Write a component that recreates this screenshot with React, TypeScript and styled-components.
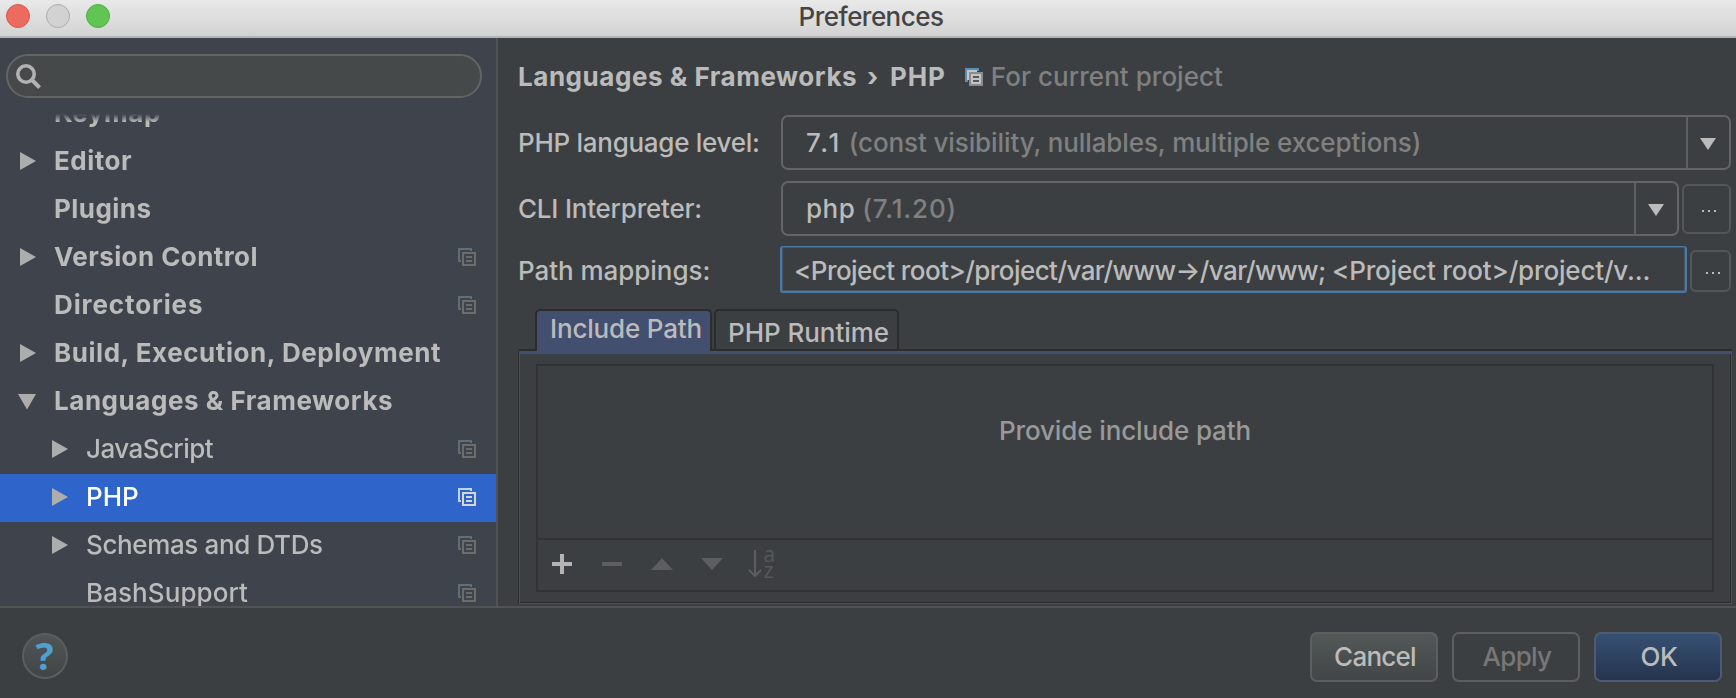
import React from 'react';
import styled, { createGlobalStyle } from 'styled-components';

const Global = createGlobalStyle`
  * { box-sizing: border-box; }
  body { margin: 0; background: #3c3f41; }
`;

const Window = styled.div`
  width: 1736px;
  height: 698px;
  display: flex;
  flex-direction: column;
  overflow: hidden;
  background: #3c3f41;
  color: #bbbbbb;
  font: 450 26px/32px Inter, "Liberation Sans", sans-serif;
  white-space: nowrap;
`;

const Label = styled.span<{ $ls?: number; $color?: string; $bold?: boolean }>`
  letter-spacing: ${p => p.$ls ?? 0}px;
  ${p => p.$bold && 'font-weight: 700;'}
  ${p => p.$color && `color: ${p.$color};`}
`;

/* Title bar */
const TitleBar = styled.header`
  flex: none;
  height: 38px;
  display: grid;
  grid-template-columns: 1fr auto 1fr;
  background: linear-gradient(#e9e9e9, #d3d3d3);
  border-bottom: 2px solid #b4b4b4;
`;
const Lights = styled.div`
  display: flex;
  gap: 16px;
  padding: 4px 0 0 6px;
`;
const Light = styled.span<{ $fill: string; $edge: string }>`
  width: 24px;
  height: 24px;
  border-radius: 50%;
  background: ${p => p.$fill};
  border: 1px solid ${p => p.$edge};
`;
const Title = styled.div`
  color: #454545;
  letter-spacing: -0.54px;
  padding: 0 0 0 6px;
  line-height: 34px;
`;

/* Sidebar */
const Body = styled.div`
  flex: none;
  height: 568px;
  display: flex;
`;
const Sidebar = styled.nav`
  width: 498px;
  flex: none;
  display: flex;
  flex-direction: column;
  background: #3e434c;
  border-right: 2px solid #515253;
`;
const Search = styled.div`
  flex: none;
  width: 476px;
  height: 44px;
  margin: 16px 0 0 6px;
  padding: 8px 0 0 8px;
  border: 2px solid #646464;
  border-radius: 22px;
  background: #45494a;
  svg { display: block; }
`;
const Tree = styled.div`
  flex: 1;
  min-height: 0;
  margin-top: 16px;
  overflow: hidden;
  mask-image: linear-gradient(transparent, #000 8px);
`;
const Row = styled.div<{ $child?: boolean; $selected?: boolean; $cut?: boolean }>`
  height: 48px;
  margin-top: ${p => (p.$cut ? -24 : 0)}px;
  padding: 0 20px 3px ${p => (p.$child ? 50 : 18)}px;
  display: flex;
  align-items: center;
  background: ${p => (p.$selected ? '#2f65ca' : 'transparent')};
  color: ${p => (p.$selected ? '#ffffff' : '#bbbbbb')};
`;
const Arrow = styled.span`
  width: 36px;
  height: 18px;
  flex: none;
  svg { display: block; }
`;
const Grow = styled.span`
  flex: 1;
`;

/* Settings page */
const Page = styled.main`
  flex: 1;
  min-width: 0;
  padding: 23px 5px 0 20px;
  display: flex;
  flex-direction: column;
`;
const Crumbs = styled.div`
  height: 32px;
  display: flex;
  align-items: center;
  svg { margin: 0 8px 0 19px; }
`;
const Separator = styled.span`
  font-weight: 700;
  width: 31px;
  text-align: center;
  margin-right: 2px;
`;
const FormRow = styled.div<{ $h: number; $top: number }>`
  display: flex;
  align-items: center;
  height: ${p => p.$h}px;
  margin-top: ${p => p.$top}px;
`;
const FieldName = styled.div<{ $ls: number; $drop?: number }>`
  width: 263px;
  flex: none;
  padding-top: ${p => p.$drop ?? 0}px;
  letter-spacing: ${p => p.$ls}px;
`;
const Combo = styled.div`
  flex: 1;
  height: 55px;
  display: flex;
  border: 2px solid #646464;
  border-radius: 7px;
`;
const ComboText = styled.div`
  flex: 1;
  display: flex;
  align-items: center;
  padding: 1px 0 0 23px;
`;
const Muted = styled.span<{ $ls: number; $gap: number }>`
  color: #808080;
  letter-spacing: ${p => p.$ls}px;
  margin-left: ${p => p.$gap}px;
`;
const ComboButton = styled.div`
  width: 43px;
  padding: 3px 1px 0 0;
  border-left: 2px solid #5c5e5f;
  display: flex;
  align-items: center;
  justify-content: center;
`;
const Dots = styled.div<{ $w: number; $h: number; $drop?: number }>`
  width: ${p => p.$w}px;
  height: ${p => p.$h}px;
  margin: ${p => p.$drop ?? 0}px 0 0 3px;
  padding: 4px 0 0 5px;
  flex: none;
  display: flex;
  align-items: center;
  justify-content: center;
  border: 2px solid #555657;
  border-radius: 6px;
`;
const PathField = styled.div`
  width: 907px;
  height: 47px;
  flex: none;
  margin-left: -1px;
  padding: 8px 0 0 12px;
  border: 2px solid #4a78a8;
  border-top-width: 1px;
  border-radius: 3px;
  box-shadow: inset 0 0 0 1px #45586a;
  overflow: hidden;
`;

/* Tabs */
const Tabs = styled.div`
  height: 42px;
  margin-top: 16px;
  padding-left: 17px;
  display: flex;
`;
const Tab = styled.div<{ $active?: boolean; $w: number }>`
  width: ${p => p.$w}px;
  height: 42px;
  padding: ${p => (p.$active ? '2px 0 0 13px' : '6px 0 0 12px')};
  margin-left: ${p => (p.$active ? 0 : 2)}px;
  border: 2px solid #2b2c2d;
  border-bottom: 0;
  border-radius: 5px 5px 0 0;
  background: ${p => (p.$active ? '#424f6e' : 'transparent')};
  ${p => p.$active && 'position: relative; z-index: 1;'}
`;
const TabPanel = styled.section`
  width: 1213px;
  height: 253px;
  margin-left: 1px;
  padding: 10px 16px 0 16px;
  border: 1px solid #424f6e;
  border-top: 3px solid #424f6e;
  box-shadow: 0 -2px 0 #2b2c2d, -1px 0 0 #2b2c2d, inset 0 -1px 0 #2b2c2d, inset -1px 0 0 #2b2c2d;
`;
const ListBox = styled.div`
  width: 1178px;
  height: 228px;
  border: 2px solid #323232;
  display: flex;
  flex-direction: column;
`;
const Empty = styled.div`
  height: 174px;
  padding-top: 49px;
  text-align: center;
  color: #999999;
  letter-spacing: -0.12px;
  border-bottom: 2px solid #323232;
`;
const Toolbar = styled.div`
  padding: 10px 0 0 14px;
  svg { display: block; overflow: visible; }
`;

/* Footer */
const Footer = styled.footer`
  flex: 1;
  border-top: 2px solid #515253;
  display: flex;
  align-items: flex-start;
  padding: 24px 14px 0 22px;
`;
const Help = styled.div`
  width: 46px;
  height: 46px;
  margin-top: 1px;
  border: 2px solid #5b5d5e;
  border-radius: 50%;
  background: linear-gradient(#505556, #414546);
  color: #4f9fd0;
  font: 700 38px/41px "Open Sans", sans-serif;
  text-align: center;
  padding-right: 1px;
`;
const Button = styled.button<{ $kind: 'plain' | 'disabled' | 'primary'; $ls: number }>`
  width: 128px;
  height: 50px;
  margin-left: 14px;
  padding: 0 0 0 2px;
  border: 2px solid ${p => (p.$kind === 'primary' ? '#4d5c70' : '#5c5e5f')};
  border-radius: 7px;
  font: inherit;
  letter-spacing: ${p => p.$ls}px;
  color: ${p => (p.$kind === 'disabled' ? '#777777' : '#bbbbbb')};
  background: ${p =>
    p.$kind === 'primary' ? 'linear-gradient(#365072, #26344e)'
    : p.$kind === 'plain' ? 'linear-gradient(#525758, #424647)' : 'transparent'};
`;

const ScopeIcon = ({ back, front, fill }: { back: string; front: string; fill?: string }) => (
  <svg width="18" height="18" viewBox="0 0 18 18" shapeRendering="crispEdges">
    {fill && <path d="M2 2H12V4H4V12H2Z" fill={fill} />}
    <path d="M0 0H14V3H12V2H2V12H3V14H0Z" fill={back} />
    <path d="M4 4H18V18H4ZM6 6V16H16V6Z" fill={front} fillRule="evenodd" />
    {fill && <path d="M6 6H16V16H6Z" fill={fill} />}
    <path d="M8 8H14V10H8ZM8 12H14V14H8Z" fill={fill ? '#55585a' : front} />
  </svg>
);

type Item = { text: string; ls: number; bold?: boolean; child?: boolean; arrow?: 'right' | 'down'; scope?: boolean; selected?: boolean; cut?: boolean };
const items: Item[] = [
  { text: 'Keymap', ls: 0.567, bold: true, cut: true },
  { text: 'Editor', ls: 0.5, bold: true, arrow: 'right' },
  { text: 'Plugins', ls: 0.45, bold: true },
  { text: 'Version Control', ls: 0.42, bold: true, arrow: 'right', scope: true },
  { text: 'Directories', ls: 0.891, bold: true, scope: true },
  { text: 'Build, Execution, Deployment', ls: 0.55, bold: true, arrow: 'right' },
  { text: 'Languages & Frameworks', ls: 0.54, bold: true, arrow: 'down' },
  { text: 'JavaScript', ls: -0.55, child: true, arrow: 'right', scope: true },
  { text: 'PHP', ls: 0, child: true, arrow: 'right', scope: true, selected: true },
  { text: 'Schemas and DTDs', ls: -0.37, child: true, arrow: 'right', scope: true },
  { text: 'BashSupport', ls: 0.08, child: true, scope: true },
];

const DropArrow = () => (
  <svg width="16" height="12" viewBox="0 0 16 12"><path d="M0 0H16L8 12Z" fill="#bbbbbb" /></svg>
);
const DotsIcon = () => (
  <svg width="14" height="2" viewBox="0 0 14 2"><path d="M0 0h2v2H0zM6 0h2v2H6zM12 0h2v2H12z" fill="#bbbbbb" /></svg>
);

export default function App() {
  return (
    <Window>
      <Global />
      <TitleBar>
        <Lights>
          <Light $fill="#ed6a5e" $edge="#d9584d" />
          <Light $fill="#d2d2d2" $edge="#adadad" />
          <Light $fill="#61c554" $edge="#51ae45" />
        </Lights>
        <Title>Preferences</Title>
      </TitleBar>
      <Body>
        <Sidebar>
          <Search>
            <svg width="28" height="28" viewBox="0 0 28 28" fill="none" stroke="#b0b2b3">
              <circle cx="10" cy="10" r="8.2" strokeWidth="3.6" />
              <path d="M16 16L23.6 23.6" strokeWidth="4" />
            </svg>
          </Search>
          <Tree>
            {items.map(i => (
              <Row key={i.text} $child={i.child} $selected={i.selected} $cut={i.cut}>
                <Arrow>
                  {i.arrow && (
                    <svg width="20" height="18" viewBox="0 0 20 18">
                      <path d={i.arrow === 'right' ? 'M2 0L18 9L2 18Z' : 'M0 2H18L9 17.5Z'} fill="#adadad" />
                    </svg>
                  )}
                </Arrow>
                <Label $bold={i.bold} $ls={i.ls}>{i.text}</Label>
                <Grow />
                {i.scope && (
                  <ScopeIcon back={i.selected ? '#b9d5ec' : '#5f6d78'} front={i.selected ? '#d6d6d0' : '#6c6d6a'} />
                )}
              </Row>
            ))}
          </Tree>
        </Sidebar>
        <Page>
          <Crumbs>
            <Label $bold $ls={0.54}>Languages &amp; Frameworks</Label>
            <Separator>›</Separator>
            <Label $bold $ls={0.865}>PHP</Label>
            <ScopeIcon back="#5590b8" front="#8c8c8c" fill="#c4c4c4" />
            <Label $ls={0.04} $color="#808080">For current project</Label>
          </Crumbs>
          <FormRow $h={55} $top={22}>
            <FieldName $ls={-0.28}>PHP language level:</FieldName>
            <Combo>
              <ComboText>
                <Label $ls={2.6}>7.1</Label>
                <Muted $ls={-0.11} $gap={7}>(const visibility, nullables, multiple exceptions)</Muted>
              </ComboText>
              <ComboButton><DropArrow /></ComboButton>
            </Combo>
          </FormRow>
          <FormRow $h={55} $top={11}>
            <FieldName $ls={-0.22}>CLI Interpreter:</FieldName>
            <Combo>
              <ComboText>
                <Label $ls={0.5}>php</Label>
                <Muted $ls={0.85} $gap={7}>(7.1.20)</Muted>
              </ComboText>
              <ComboButton><DropArrow /></ComboButton>
            </Combo>
            <Dots $w={49} $h={50}><DotsIcon /></Dots>
          </FormRow>
          <FormRow $h={47} $top={10}>
            <FieldName $ls={-0.05} $drop={2}>Path mappings:</FieldName>
            <PathField>
              <Label $ls={-0.56}>{'<Project root>/project/var/www→/var/www; '}</Label>
              <Label $ls={-0.17}>{'<Project root>/project/v...'}</Label>
            </PathField>
            <Dots $w={41} $h={42} $drop={2}><DotsIcon /></Dots>
          </FormRow>
          <Tabs>
            <Tab $active $w={177}><Label $ls={-0.17}>Include Path</Label></Tab>
            <Tab $w={185}><Label $ls={-0.05}>PHP Runtime</Label></Tab>
          </Tabs>
          <TabPanel>
            <ListBox>
              <Empty>Provide include path</Empty>
              <Toolbar>
                <svg width="226" height="30" viewBox="0 0 226 30">
                  <path d="M8 4h4v8h8v4h-8v8H8v-8H0v-4h8z" fill="#b4b4b4" />
                  <path d="M50 12h20v4H50zM99 20h22L110 8zM149 8h22L160 20z" fill="#5d5e5f" />
                  <path d="M203 0v25M197 20l6 6l6 -6" fill="none" stroke="#5a5c5d" strokeWidth="2.2" />
                  <text x="211.5" y="12" fontSize="21" fontFamily="Open Sans" fill="#56585a">a</text>
                  <text x="211.5" y="28" fontSize="22" fontFamily="Open Sans" fill="#56585a">z</text>
                </svg>
              </Toolbar>
            </ListBox>
          </TabPanel>
        </Page>
      </Body>
      <Footer>
        <Help>?</Help>
        <Grow />
        <Button $kind="plain" $ls={-0.75}>Cancel</Button>
        <Button $kind="disabled" $ls={-0.7}>Apply</Button>
        <Button $kind="primary" $ls={-0.5}>OK</Button>
      </Footer>
    </Window>
  );
}
